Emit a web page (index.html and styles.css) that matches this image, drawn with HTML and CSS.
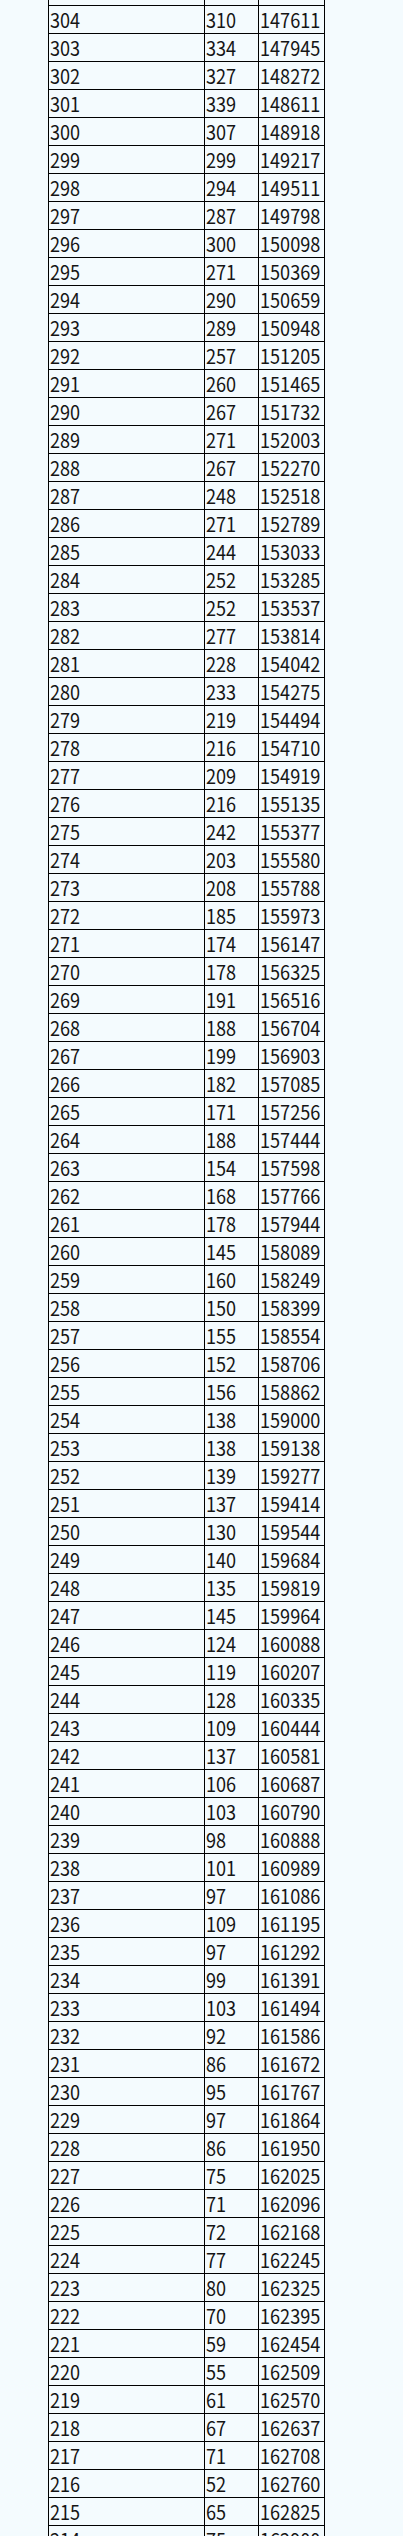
FILE: index.html
```html
<!DOCTYPE html>
<html lang="zh">
<head>
<meta charset="utf-8">
<title>一分一段表</title>
<link rel="stylesheet" href="styles.css">
</head>
<body>
<div class="page">
<table class="score-table">
<colgroup><col class="c1"><col class="c2"><col class="c3"></colgroup>
<tbody>
<tr><td></td><td></td><td></td></tr>
<tr><td><span>304</span></td><td><span>310</span></td><td><span>147611</span></td></tr>
<tr><td><span>303</span></td><td><span>334</span></td><td><span>147945</span></td></tr>
<tr><td><span>302</span></td><td><span>327</span></td><td><span>148272</span></td></tr>
<tr><td><span>301</span></td><td><span>339</span></td><td><span>148611</span></td></tr>
<tr><td><span>300</span></td><td><span>307</span></td><td><span>148918</span></td></tr>
<tr><td><span>299</span></td><td><span>299</span></td><td><span>149217</span></td></tr>
<tr><td><span>298</span></td><td><span>294</span></td><td><span>149511</span></td></tr>
<tr><td><span>297</span></td><td><span>287</span></td><td><span>149798</span></td></tr>
<tr><td><span>296</span></td><td><span>300</span></td><td><span>150098</span></td></tr>
<tr><td><span>295</span></td><td><span>271</span></td><td><span>150369</span></td></tr>
<tr><td><span>294</span></td><td><span>290</span></td><td><span>150659</span></td></tr>
<tr><td><span>293</span></td><td><span>289</span></td><td><span>150948</span></td></tr>
<tr><td><span>292</span></td><td><span>257</span></td><td><span>151205</span></td></tr>
<tr><td><span>291</span></td><td><span>260</span></td><td><span>151465</span></td></tr>
<tr><td><span>290</span></td><td><span>267</span></td><td><span>151732</span></td></tr>
<tr><td><span>289</span></td><td><span>271</span></td><td><span>152003</span></td></tr>
<tr><td><span>288</span></td><td><span>267</span></td><td><span>152270</span></td></tr>
<tr><td><span>287</span></td><td><span>248</span></td><td><span>152518</span></td></tr>
<tr><td><span>286</span></td><td><span>271</span></td><td><span>152789</span></td></tr>
<tr><td><span>285</span></td><td><span>244</span></td><td><span>153033</span></td></tr>
<tr><td><span>284</span></td><td><span>252</span></td><td><span>153285</span></td></tr>
<tr><td><span>283</span></td><td><span>252</span></td><td><span>153537</span></td></tr>
<tr><td><span>282</span></td><td><span>277</span></td><td><span>153814</span></td></tr>
<tr><td><span>281</span></td><td><span>228</span></td><td><span>154042</span></td></tr>
<tr><td><span>280</span></td><td><span>233</span></td><td><span>154275</span></td></tr>
<tr><td><span>279</span></td><td><span>219</span></td><td><span>154494</span></td></tr>
<tr><td><span>278</span></td><td><span>216</span></td><td><span>154710</span></td></tr>
<tr><td><span>277</span></td><td><span>209</span></td><td><span>154919</span></td></tr>
<tr><td><span>276</span></td><td><span>216</span></td><td><span>155135</span></td></tr>
<tr><td><span>275</span></td><td><span>242</span></td><td><span>155377</span></td></tr>
<tr><td><span>274</span></td><td><span>203</span></td><td><span>155580</span></td></tr>
<tr><td><span>273</span></td><td><span>208</span></td><td><span>155788</span></td></tr>
<tr><td><span>272</span></td><td><span>185</span></td><td><span>155973</span></td></tr>
<tr><td><span>271</span></td><td><span>174</span></td><td><span>156147</span></td></tr>
<tr><td><span>270</span></td><td><span>178</span></td><td><span>156325</span></td></tr>
<tr><td><span>269</span></td><td><span>191</span></td><td><span>156516</span></td></tr>
<tr><td><span>268</span></td><td><span>188</span></td><td><span>156704</span></td></tr>
<tr><td><span>267</span></td><td><span>199</span></td><td><span>156903</span></td></tr>
<tr><td><span>266</span></td><td><span>182</span></td><td><span>157085</span></td></tr>
<tr><td><span>265</span></td><td><span>171</span></td><td><span>157256</span></td></tr>
<tr><td><span>264</span></td><td><span>188</span></td><td><span>157444</span></td></tr>
<tr><td><span>263</span></td><td><span>154</span></td><td><span>157598</span></td></tr>
<tr><td><span>262</span></td><td><span>168</span></td><td><span>157766</span></td></tr>
<tr><td><span>261</span></td><td><span>178</span></td><td><span>157944</span></td></tr>
<tr><td><span>260</span></td><td><span>145</span></td><td><span>158089</span></td></tr>
<tr><td><span>259</span></td><td><span>160</span></td><td><span>158249</span></td></tr>
<tr><td><span>258</span></td><td><span>150</span></td><td><span>158399</span></td></tr>
<tr><td><span>257</span></td><td><span>155</span></td><td><span>158554</span></td></tr>
<tr><td><span>256</span></td><td><span>152</span></td><td><span>158706</span></td></tr>
<tr><td><span>255</span></td><td><span>156</span></td><td><span>158862</span></td></tr>
<tr><td><span>254</span></td><td><span>138</span></td><td><span>159000</span></td></tr>
<tr><td><span>253</span></td><td><span>138</span></td><td><span>159138</span></td></tr>
<tr><td><span>252</span></td><td><span>139</span></td><td><span>159277</span></td></tr>
<tr><td><span>251</span></td><td><span>137</span></td><td><span>159414</span></td></tr>
<tr><td><span>250</span></td><td><span>130</span></td><td><span>159544</span></td></tr>
<tr><td><span>249</span></td><td><span>140</span></td><td><span>159684</span></td></tr>
<tr><td><span>248</span></td><td><span>135</span></td><td><span>159819</span></td></tr>
<tr><td><span>247</span></td><td><span>145</span></td><td><span>159964</span></td></tr>
<tr><td><span>246</span></td><td><span>124</span></td><td><span>160088</span></td></tr>
<tr><td><span>245</span></td><td><span>119</span></td><td><span>160207</span></td></tr>
<tr><td><span>244</span></td><td><span>128</span></td><td><span>160335</span></td></tr>
<tr><td><span>243</span></td><td><span>109</span></td><td><span>160444</span></td></tr>
<tr><td><span>242</span></td><td><span>137</span></td><td><span>160581</span></td></tr>
<tr><td><span>241</span></td><td><span>106</span></td><td><span>160687</span></td></tr>
<tr><td><span>240</span></td><td><span>103</span></td><td><span>160790</span></td></tr>
<tr><td><span>239</span></td><td><span>98</span></td><td><span>160888</span></td></tr>
<tr><td><span>238</span></td><td><span>101</span></td><td><span>160989</span></td></tr>
<tr><td><span>237</span></td><td><span>97</span></td><td><span>161086</span></td></tr>
<tr><td><span>236</span></td><td><span>109</span></td><td><span>161195</span></td></tr>
<tr><td><span>235</span></td><td><span>97</span></td><td><span>161292</span></td></tr>
<tr><td><span>234</span></td><td><span>99</span></td><td><span>161391</span></td></tr>
<tr><td><span>233</span></td><td><span>103</span></td><td><span>161494</span></td></tr>
<tr><td><span>232</span></td><td><span>92</span></td><td><span>161586</span></td></tr>
<tr><td><span>231</span></td><td><span>86</span></td><td><span>161672</span></td></tr>
<tr><td><span>230</span></td><td><span>95</span></td><td><span>161767</span></td></tr>
<tr><td><span>229</span></td><td><span>97</span></td><td><span>161864</span></td></tr>
<tr><td><span>228</span></td><td><span>86</span></td><td><span>161950</span></td></tr>
<tr><td><span>227</span></td><td><span>75</span></td><td><span>162025</span></td></tr>
<tr><td><span>226</span></td><td><span>71</span></td><td><span>162096</span></td></tr>
<tr><td><span>225</span></td><td><span>72</span></td><td><span>162168</span></td></tr>
<tr><td><span>224</span></td><td><span>77</span></td><td><span>162245</span></td></tr>
<tr><td><span>223</span></td><td><span>80</span></td><td><span>162325</span></td></tr>
<tr><td><span>222</span></td><td><span>70</span></td><td><span>162395</span></td></tr>
<tr><td><span>221</span></td><td><span>59</span></td><td><span>162454</span></td></tr>
<tr><td><span>220</span></td><td><span>55</span></td><td><span>162509</span></td></tr>
<tr><td><span>219</span></td><td><span>61</span></td><td><span>162570</span></td></tr>
<tr><td><span>218</span></td><td><span>67</span></td><td><span>162637</span></td></tr>
<tr><td><span>217</span></td><td><span>71</span></td><td><span>162708</span></td></tr>
<tr><td><span>216</span></td><td><span>52</span></td><td><span>162760</span></td></tr>
<tr><td><span>215</span></td><td><span>65</span></td><td><span>162825</span></td></tr>
<tr><td><span>214</span></td><td><span>75</span></td><td><span>162900</span></td></tr>
</tbody>
</table>
</div>
</body>
</html>
```
FILE: styles.css
```css
html, body {
  margin: 0;
  padding: 0;
  background: #f4fbfe;
}
.page {
  padding-left: 48px;
  overflow: hidden;
  height: 2536px;
}
.score-table {
  margin-top: -23px;
  border-collapse: collapse;
  table-layout: fixed;
  width: 276px;
  font-family: "Noto Sans CJK SC", "Liberation Sans", sans-serif;
  font-size: 20px;
  color: #151515;
}
.c1 { width: 156px; }
.c2 { width: 54px; }
.c3 { width: 66px; }
.score-table td {
  border: 1px solid #000;
  height: 27px;
  padding: 0 0 0 1px;
  line-height: 27px;
  white-space: nowrap;
  overflow: hidden;
  vertical-align: middle;
}
.score-table td span {
  display: inline-block;
  transform: scaleX(0.905);
  transform-origin: left center;
}
```
